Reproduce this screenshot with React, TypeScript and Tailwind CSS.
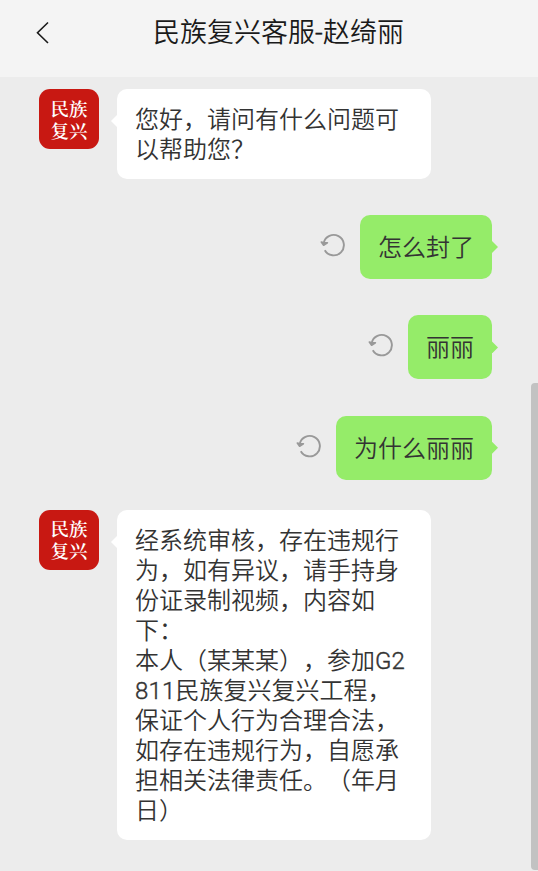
import type { ReactNode } from 'react';

const serifStack = "font-['Noto_Serif_CJK_SC','Noto_Serif_SC','Noto_Sans_CJK_SC',serif]";

function Avatar() {
  return (
    <div
      className={`flex size-[60px] shrink-0 items-center justify-center rounded-[11px] bg-[#c81812] pb-px text-[18.5px] leading-[22px] font-semibold text-white ${serifStack}`}
    >
      <p className="w-[37px] whitespace-normal">民族复兴</p>
    </div>
  );
}

function ResendIcon() {
  return (
    <svg className="mt-[18px] mr-[15px] h-[24px] w-[25px] shrink-0" viewBox="0 0 25 24" fill="none">
      <path d="M4.8 17.2A10.2 10.2 0 1 0 3.7 10" stroke="#999" strokeWidth="1.9" />
      <path
        d="M1.3 9L3.6 12.2L7.4 9.8L3.9 9.8Z"
        fill="#999"
        stroke="#999"
        strokeWidth="1.6"
        strokeLinecap="round"
        strokeLinejoin="round"
      />
    </svg>
  );
}

function Incoming({ children }: { children: ReactNode }) {
  return (
    <div className="flex items-start pl-[39px]">
      <Avatar />
      <div className="relative ml-[18px] w-[314px] rounded-[10px] bg-white pt-[16px] pb-[14px] pl-[18px]">
        <div className="absolute top-[26px] -left-[6px] h-[12px] w-[6px] bg-white [clip-path:polygon(100%_0,0_50%,100%_100%)]" />
        {children}
      </div>
    </div>
  );
}

function Outgoing({ text }: { text: string }) {
  return (
    <div className="flex items-start justify-end pr-[46px]">
      <ResendIcon />
      <div className="relative rounded-[10px] bg-[#95ec69] px-[18px] pt-[18px] pb-[16px]">
        {text}
        <div className="absolute top-[26px] -right-[6px] h-[12px] w-[6px] bg-[#95ec69] [clip-path:polygon(0_0,100%_50%,0_100%)]" />
      </div>
    </div>
  );
}

function Latin({ children }: { children: string }) {
  return <span className="tracking-[0.2px] [-webkit-text-stroke:0.4px_currentColor]">{children}</span>;
}

export default function App() {
  return (
    <div
      lang="zh-CN"
      className="relative flex h-[871px] w-[538px] flex-col overflow-hidden bg-[#ececec] font-['Roboto','Noto_Sans_CJK_SC',sans-serif] text-[24px] leading-[30px] font-[350] whitespace-nowrap text-[#333] [text-spacing-trim:space-all]"
    >
      <header className="flex h-[77px] shrink-0 items-start bg-[#f4f4f4] pl-[36px]">
        <svg className="mt-[21px] h-[23px] w-[14px]" viewBox="0 0 14 23" fill="none">
          <path d="M12 1.5L1.5 11.7L12 22" stroke="#1a1a1a" strokeWidth="1.6" />
        </svg>
        <h1 className="mt-[13px] ml-[103px] text-[27px] leading-[40px] font-[350] text-[#1a1a1a]">
          民族复兴客服<Latin>-</Latin>赵绮丽
        </h1>
      </header>
      <main className="flex flex-col pt-[12px]">
        <Incoming>
          <p>您好，请问有什么问题可</p>
          <p>以帮助您？</p>
        </Incoming>
        <div className="mt-[36px] mb-[30.2px] flex flex-col gap-[36.4px]">
          <Outgoing text="怎么封了" />
          <Outgoing text="丽丽" />
          <Outgoing text="为什么丽丽" />
        </div>
        <Incoming>
          <p>经系统审核，存在违规行</p>
          <p>为，如有异议，请手持身</p>
          <p>份证录制视频，内容如</p>
          <p>下：</p>
          <p>
            本人（某某某），参加<Latin>G2</Latin>
          </p>
          <p>
            <Latin>811</Latin>民族复兴复兴工程，
          </p>
          <p>保证个人行为合理合法，</p>
          <p>如存在违规行为，自愿承</p>
          <p>担相关法律责任。（年月</p>
          <p>日）</p>
        </Incoming>
      </main>
      <div className="absolute top-[383px] right-0 h-[487px] w-[7px] rounded-l-[4px] bg-[#c2c2c2]" />
    </div>
  );
}
